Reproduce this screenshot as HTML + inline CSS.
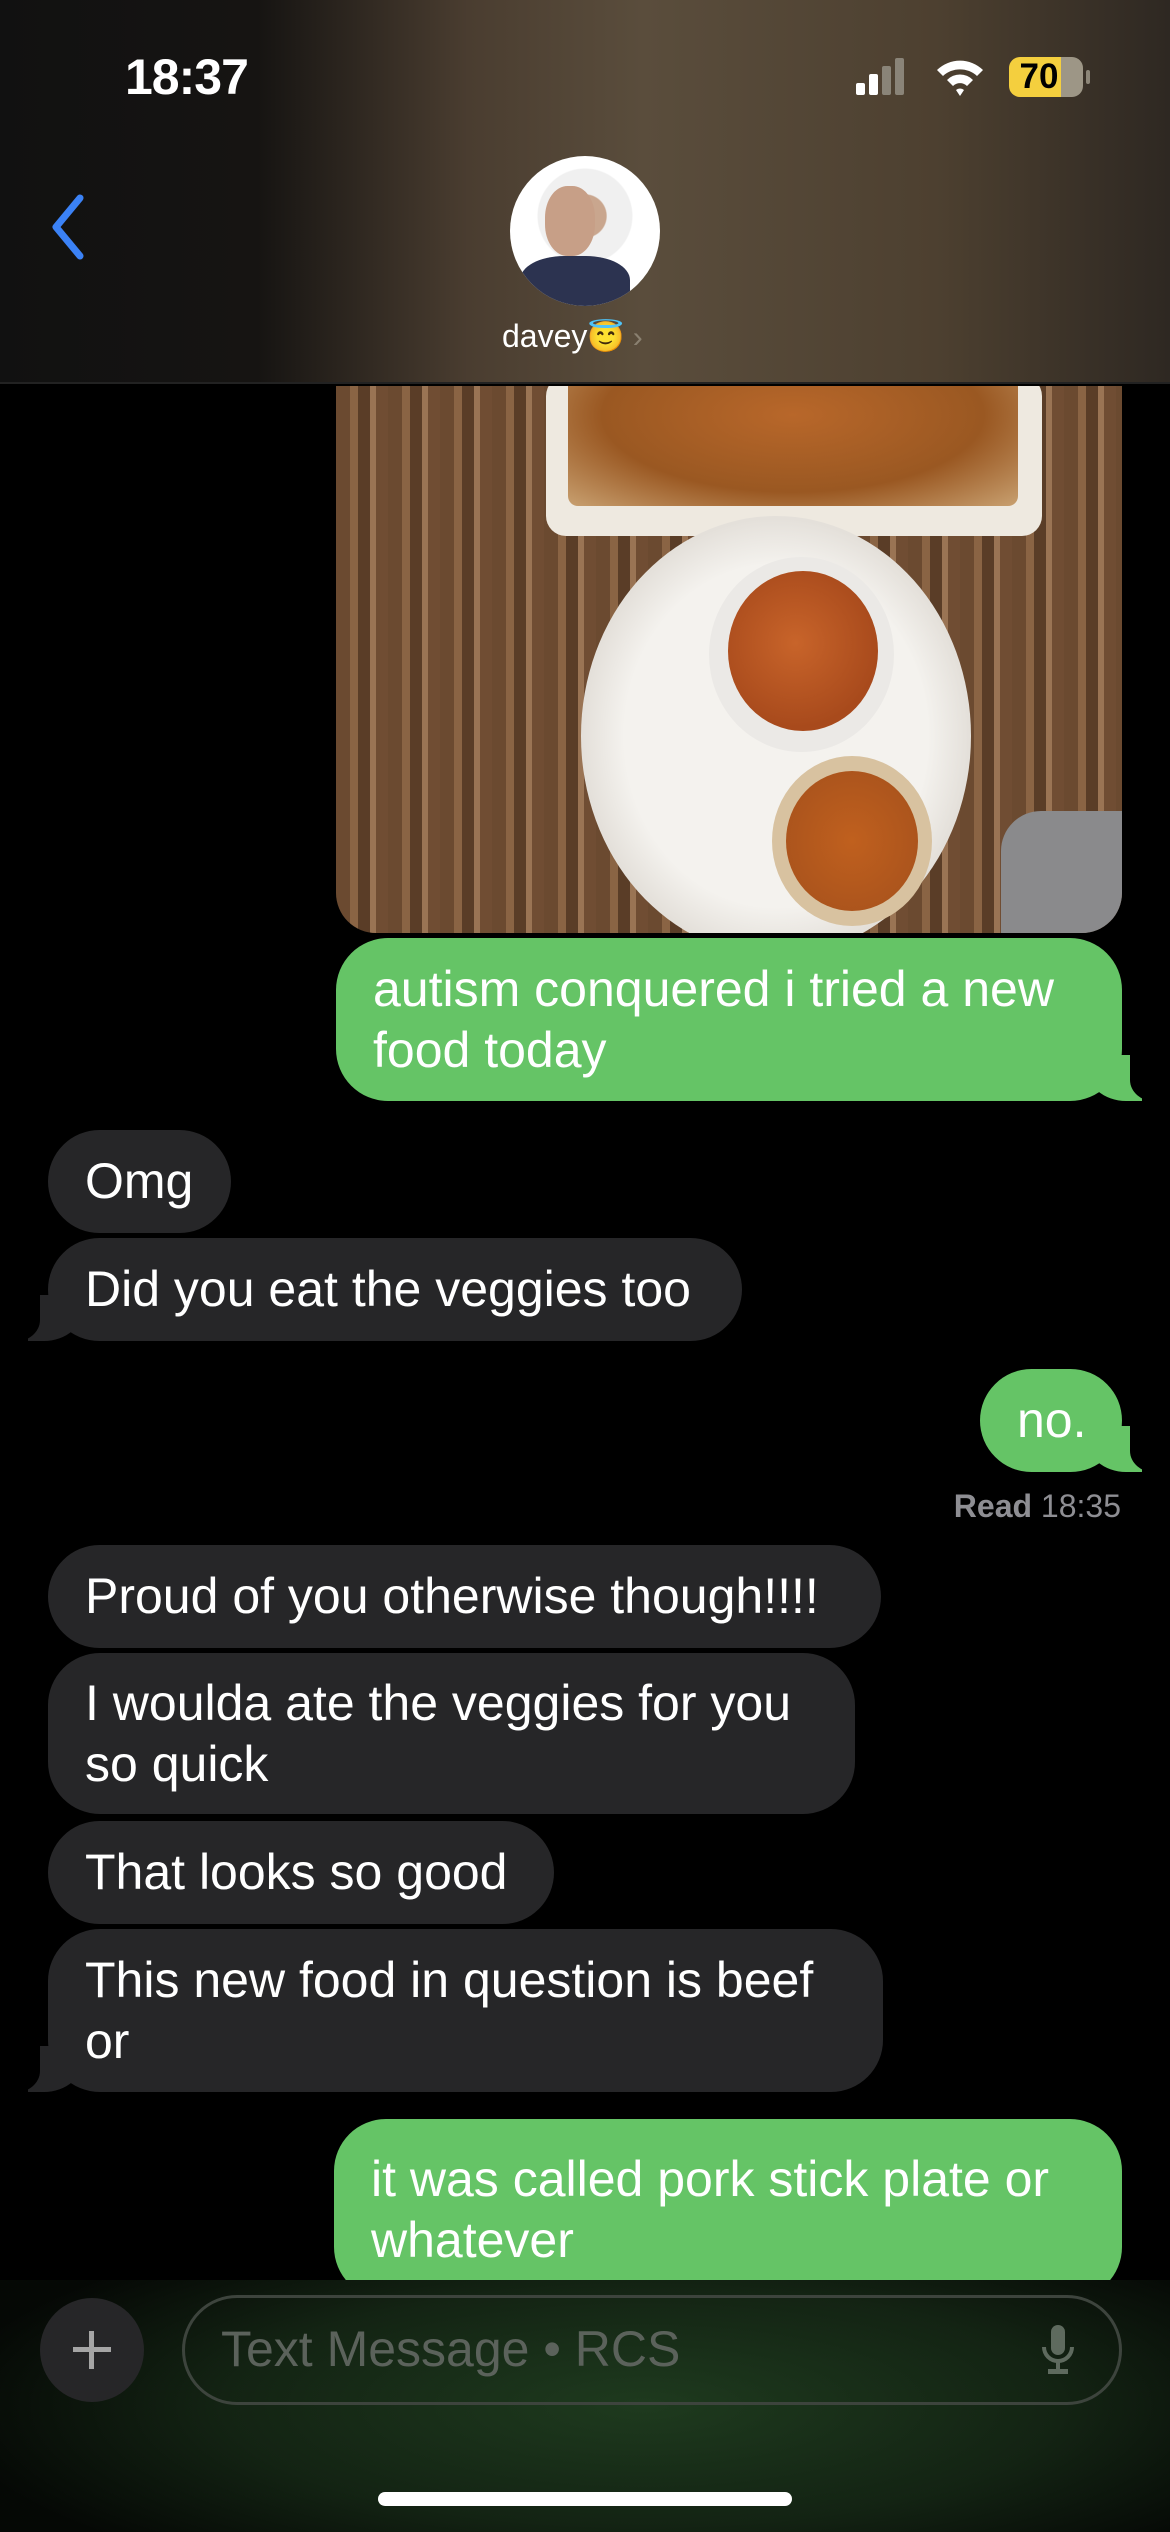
<!DOCTYPE html>
<html><head><meta charset="utf-8">
<style>
*{margin:0;padding:0;box-sizing:border-box}
body{width:1170px;height:2532px;background:#000;position:relative;overflow:hidden;font-family:"Liberation Sans",sans-serif;color:#fff}
.hdr{position:absolute;left:0;top:0;width:1170px;height:384px;background:linear-gradient(90deg,#111 0%,#161412 22%,#4a3d30 40%,#5a4d3c 55%,#4d4030 80%,#2e2822 100%);border-bottom:2px solid #222}
.time{position:absolute;left:125px;top:48px;font-size:50px;font-weight:bold;letter-spacing:-1px}
.b{position:absolute;font-size:50px;line-height:61px;padding:0 37px;display:flex;align-items:center;border-radius:52px;white-space:nowrap;z-index:1}
.s{background:#65c466;color:#fff}
.r{background:#262628;color:#fff}
.tr:before{content:"";position:absolute;right:-20px;bottom:0;width:56px;height:46px;background:#65c466;border-bottom-left-radius:40px 34px;z-index:-1}
.tr:after{content:"";position:absolute;right:-44px;bottom:-1px;width:36px;height:50px;background:#000;border-bottom-left-radius:26px 22px;z-index:-1}
.tl:before{content:"";position:absolute;left:-20px;bottom:0;width:56px;height:46px;background:#262628;border-bottom-right-radius:40px 34px;z-index:-1}
.tl:after{content:"";position:absolute;left:-44px;bottom:-1px;width:36px;height:50px;background:#000;border-bottom-right-radius:26px 22px;z-index:-1}
</style></head><body>
<div class="hdr">
<div class="time">18:37</div>
<div style="position:absolute;left:856px;top:83px;width:9px;height:12px;background:#fff;border-radius:2px"></div>
<div style="position:absolute;left:869px;top:74px;width:9px;height:21px;background:#fff;border-radius:2px"></div>
<div style="position:absolute;left:882px;top:66px;width:9px;height:29px;background:#8a8478;border-radius:2px"></div>
<div style="position:absolute;left:895px;top:58px;width:9px;height:37px;background:#8a8478;border-radius:2px"></div>
<svg style="position:absolute;left:935px;top:56px" width="50" height="42" viewBox="0 0 50 42"><path d="M2 14 A33 33 0 0 1 48 14 L42 20 A25 25 0 0 0 8 20Z M12 24 A18 18 0 0 1 38 24 L32 30 A10 10 0 0 0 18 30Z M21 34 A6 6 0 0 1 29 34 L25 40Z" fill="#fff"/></svg>
<div style="position:absolute;left:1009px;top:57px;width:74px;height:40px;border-radius:11px;background:linear-gradient(90deg,#f4cf3e 0 70%,#9d9686 70%)"></div>
<div style="position:absolute;left:1086px;top:70px;width:4px;height:14px;background:#8d8678;border-radius:2px"></div>
<div style="position:absolute;left:1009px;top:57px;width:60px;height:40px;font-size:35px;font-weight:bold;color:#000;text-align:center;line-height:40px">70</div>
<svg style="position:absolute;left:48px;top:192px" width="40" height="70" viewBox="0 0 40 70"><path d="M32 6 L8 35 L32 64" stroke="#3b82f6" stroke-width="7" fill="none" stroke-linecap="round" stroke-linejoin="round"/></svg>
<div style="position:absolute;left:510px;top:156px;width:150px;height:150px;border-radius:50%;background:radial-gradient(circle at 50% 40%,#c9a68e 0 18%,#f0f0f0 19% 40%,#fff 41%),#fff;overflow:hidden">
<div style="position:absolute;left:10px;top:100px;width:110px;height:60px;background:#2c3350;border-radius:40% 40% 0 0"></div>
<div style="position:absolute;left:35px;top:30px;width:50px;height:70px;background:#c79f87;border-radius:45%"></div>
</div>
<div style="position:absolute;left:502px;top:318px;font-size:32px;color:#fff">davey<span style="font-size:30px">😇</span><span style="color:#8a8070;font-size:30px;margin-left:8px">›</span></div>
</div>

<div style="position:absolute;left:336px;top:386px;width:786px;height:547px;border-radius:0 0 40px 40px;overflow:hidden;background:repeating-linear-gradient(90deg,#6b4a30 0 14px,#8a6444 14px 22px,#5a3d27 22px 34px,#9a7454 34px 40px,#704d33 40px 52px)">
<div style="position:absolute;left:210px;top:-10px;width:496px;height:160px;background:#eee9e0;border-radius:20px"></div>
<div style="position:absolute;left:232px;top:-10px;width:450px;height:130px;background:radial-gradient(ellipse at 50% 30%,#b8672a,#9a5822 60%,#c8a070);border-radius:10px"></div>
<div style="position:absolute;left:245px;top:130px;width:390px;height:440px;border-radius:50%;background:radial-gradient(#f4f2ee 55%,#e4e0da 70%,#f0ece8)"></div>
<div style="position:absolute;left:373px;top:171px;width:185px;height:195px;border-radius:50%;background:#ebe9e6"></div>
<div style="position:absolute;left:392px;top:185px;width:150px;height:160px;border-radius:50%;background:radial-gradient(circle at 45% 45%,#c8642a,#a84a1c 70%)"></div>
<div style="position:absolute;left:436px;top:370px;width:160px;height:170px;border-radius:50%;background:#d8c2a0"></div>
<div style="position:absolute;left:450px;top:385px;width:132px;height:140px;border-radius:50%;background:radial-gradient(#c0601e,#a4501c)"></div>
<div style="position:absolute;left:665px;top:425px;width:180px;height:160px;border-radius:40px;background:#8a8a8c"></div>
</div>

<div class="b s tr" style="left:336px;top:938px;width:786px;height:163px"><div>autism conquered i tried a new<br>food today</div></div>
<div class="b r" style="left:48px;top:1130px;width:183px;height:103px">Omg</div>
<div class="b r tl" style="left:48px;top:1238px;width:694px;height:103px">Did you eat the veggies too</div>
<div class="b s tr" style="left:980px;top:1369px;width:142px;height:103px">no.</div>
<div style="position:absolute;right:49px;top:1488px;font-size:32px;color:#8e8e93"><b>Read</b> 18:35</div>
<div class="b r" style="left:48px;top:1545px;width:833px;height:103px">Proud of you otherwise though!!!!</div>
<div class="b r" style="left:48px;top:1653px;width:807px;height:161px"><div>I woulda ate the veggies for you<br>so quick</div></div>
<div class="b r" style="left:48px;top:1821px;width:506px;height:103px">That looks so good</div>
<div class="b r tl" style="left:48px;top:1929px;width:835px;height:163px"><div>This new food in question is beef<br>or</div></div>
<div class="b s" style="left:334px;top:2119px;width:788px;height:180px;align-items:flex-start;padding-top:30px"><div>it was called pork stick plate or<br>whatever</div></div>

<div style="position:absolute;left:0;top:2280px;width:1170px;height:252px;background:radial-gradient(ellipse 60% 80% at 55% 50%,#1e3a1e,#132313 60%,#050805 100%);z-index:2"></div>
<div style="position:absolute;left:40px;top:2298px;width:104px;height:104px;border-radius:50%;background:#262628;z-index:3"></div>
<div style="position:absolute;left:73px;top:2347px;width:38px;height:5px;background:#a5a5a5;z-index:3"></div>
<div style="position:absolute;left:89px;top:2331px;width:5px;height:38px;background:#a5a5a5;z-index:3"></div>
<div style="position:absolute;left:182px;top:2295px;width:940px;height:110px;border:3px solid #3d443d;border-radius:55px;z-index:3"></div>
<div style="position:absolute;left:221px;top:2320px;font-size:50px;color:#5b625b;z-index:3">Text Message • RCS</div>
<svg style="position:absolute;left:1038px;top:2325px;z-index:3" width="40" height="52" viewBox="0 0 40 52"><rect x="13" y="0" width="14" height="30" rx="7" fill="#5e6a5e"/><path d="M6 22 A14 14 0 0 0 34 22" stroke="#5e6a5e" stroke-width="4" fill="none"/><rect x="18" y="36" width="4" height="10" fill="#5e6a5e"/><rect x="10" y="44" width="20" height="5" fill="#5e6a5e"/></svg>
<div style="position:absolute;left:378px;top:2492px;width:414px;height:14px;border-radius:7px;background:#fff;z-index:3"></div>
</body></html>
